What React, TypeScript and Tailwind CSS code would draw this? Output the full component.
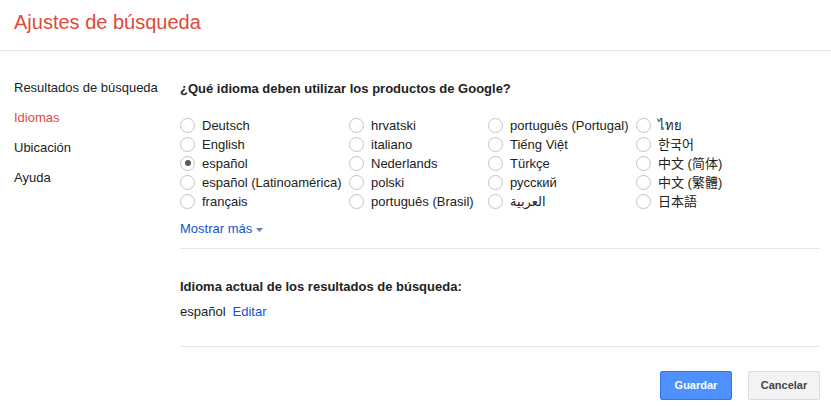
const languages = [
  "Deutsch",
  "English",
  "español",
  "español (Latinoamérica)",
  "français",
  "hrvatski",
  "italiano",
  "Nederlands",
  "polski",
  "português (Brasil)",
  "português (Portugal)",
  "Tiếng Việt",
  "Türkçe",
  "русский",
  "العربية",
  "ไทย",
  "한국어",
  "中文 (简体)",
  "中文 (繁體)",
  "日本語",
];

const navItems = ["Resultados de búsqueda", "Idiomas", "Ubicación", "Ayuda"];

function Radio({ checked }: { checked?: boolean }) {
  return (
    <span className="mr-[7px] flex h-[15px] w-[15px] shrink-0 items-center justify-center rounded-full border border-[#c4c4c4] bg-white">
      {checked && <span className="h-[6px] w-[6px] rounded-full bg-[#5a5a5a]" />}
    </span>
  );
}

export default function App() {
  return (
    <div
      className="h-[406px] w-[831px] overflow-hidden bg-white text-[13px] text-[#222]"
      style={{ fontFamily: '"Liberation Sans", Arial, "DejaVu Sans", "Noto Sans CJK SC", sans-serif' }}
    >
      <header className="h-[51px] border-b border-[#e5e5e5] pl-[14px] pt-[10px]">
        <h1 className="text-[20px] leading-[24px] text-[#dd4b39]">Ajustes de búsqueda</h1>
      </header>

      <div className="flex">
        <nav className="w-[180px] shrink-0 pl-[14px] pt-[22px]">
          {navItems.map((item) => (
            <div
              key={item}
              className={`leading-[30px] ${item === "Idiomas" ? "text-[#dd4b39]" : "text-[#222]"}`}
            >
              {item}
            </div>
          ))}
        </nav>

        <main className="flex-1 pr-[11px] pt-[30px]">
          <h2 className="font-bold leading-[16px]">¿Qué idioma deben utilizar los productos de Google?</h2>

          <div className="mt-[18.5px] grid grid-flow-col grid-cols-[169px_139px_148px_auto] grid-rows-[repeat(5,19px)]">
            {languages.map((lang) => (
              <label key={lang} className="flex items-center leading-[19px]">
                <Radio checked={lang === "español"} />
                <span>{lang}</span>
              </label>
            ))}
          </div>

          <div className="mt-[10px] flex items-center leading-[16px] text-[#15c]">
            Mostrar más
            <svg className="ml-[4px] mt-[2px]" width="7" height="4" viewBox="0 0 7 4">
              <path d="M0 0h7L3.5 4z" fill="#6a7fb0" />
            </svg>
          </div>

          <div className="mt-[11px] border-t border-[#e5e5e5]" />

          <div className="pt-[30px] font-bold leading-[16px]">Idioma actual de los resultados de búsqueda:</div>
          <div className="mt-[9px] leading-[16px]">
            español<span className="ml-[7px] text-[#15c]">Editar</span>
          </div>

          <div className="mt-[26px] border-t border-[#e5e5e5]" />

          <div className="mt-[24px] flex justify-end gap-[16px]">
            <button className="h-[29px] w-[72px] rounded-[2px] border border-[#3079ed] bg-[#4d90fe] text-[11px] font-bold text-white">
              Guardar
            </button>
            <button className="h-[29px] w-[72px] rounded-[2px] border border-[#dcdcdc] bg-[#f3f3f3] text-[11px] font-bold text-[#444]">
              Cancelar
            </button>
          </div>
        </main>
      </div>
    </div>
  );
}
